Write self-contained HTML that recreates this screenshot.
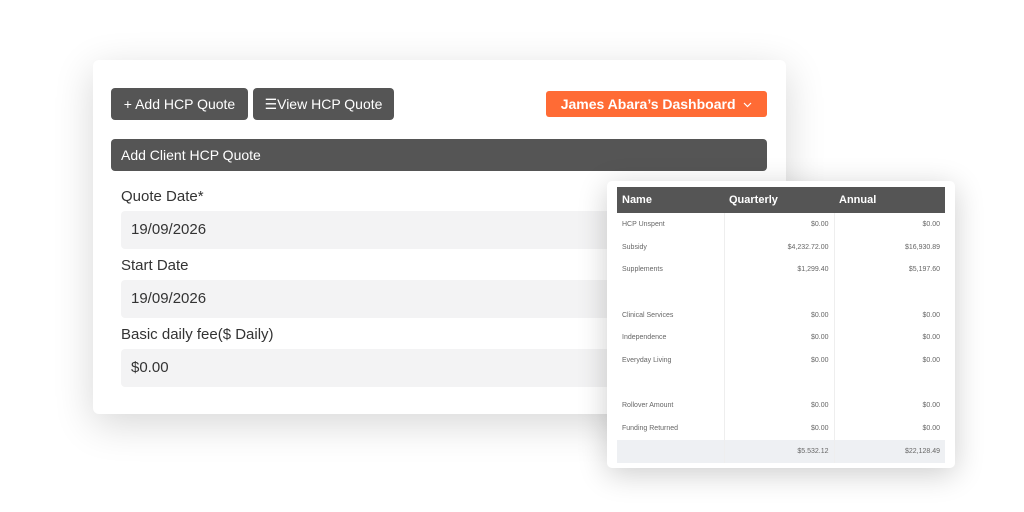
<!DOCTYPE html>
<html><head><style>
body{margin:0;width:1024px;height:512px;background:#fff;font-family:"Liberation Sans",sans-serif;position:relative;overflow:hidden}
.card{position:absolute;left:93px;top:60px;width:693px;height:354px;background:#fff;border-radius:6px;box-shadow:0 10px 40px rgba(0,0,0,.16)}
.btn{position:absolute;top:88px;height:32px;background:#555;color:#fff;border-radius:4px;font-size:14px;line-height:32px;text-align:center}
.or{position:absolute;left:546px;top:91px;width:221px;height:26px;background:#ff6b35;color:#fff;border-radius:3px;font-size:14px;font-weight:bold;line-height:26px;text-align:center}
.bar{position:absolute;left:111px;top:139px;width:656px;height:32px;background:#555;color:#fff;border-radius:4px;font-size:14px;line-height:32px;padding-left:10px;box-sizing:border-box}
.lbl{position:absolute;left:121px;font-size:15px;color:#333}
.inp{position:absolute;left:121px;width:520px;height:38px;background:#f3f3f4;border-radius:4px;font-size:15px;color:#333;line-height:38px;padding-left:10px;box-sizing:border-box}
.tc{position:absolute;left:607px;top:181px;width:348px;height:287px;background:#fff;border-radius:5px;box-shadow:0 6px 30px rgba(0,0,0,.2)}
table{position:absolute;left:10px;top:6px;width:328px;border-collapse:collapse;font-size:7px;color:#666}
th{background:#555;color:#fff;font-size:11px;text-align:left;height:26px;padding:0 5px}
td{height:22.7px;padding:0 5px;border-right:1px solid #eee}
td:last-child{border-right:none}
td.r{text-align:right}
tr.t td{background:#eef0f3}
</style></head><body>
<div class="card"></div>
<div class="btn" style="left:111px;width:137px">+ Add HCP Quote</div>
<div class="btn" style="left:253px;width:141px">☰View HCP Quote</div>
<div class="or">James Abara’s Dashboard &nbsp;<svg width="9" height="6" viewBox="0 0 9 6" style="vertical-align:middle"><path d="M1 1l3.5 3.5L8 1" stroke="#fff" stroke-width="1.2" fill="none"/></svg></div>
<div class="bar">Add Client HCP Quote</div>
<div class="lbl" style="top:188px">Quote Date*</div>
<div class="inp" style="top:211px">19/09/2026</div>
<div class="lbl" style="top:257px">Start Date</div>
<div class="inp" style="top:280px">19/09/2026</div>
<div class="lbl" style="top:326px">Basic daily fee($ Daily)</div>
<div class="inp" style="top:349px">$0.00</div>
<div class="tc"><table>
<tr><th style="width:97px">Name</th><th style="width:100px">Quarterly</th><th>Annual</th></tr>
<tr><td>HCP Unspent</td><td class="r">$0.00</td><td class="r">$0.00</td></tr>
<tr><td>Subsidy</td><td class="r">$4,232.72.00</td><td class="r">$16,930.89</td></tr>
<tr><td>Supplements</td><td class="r">$1,299.40</td><td class="r">$5,197.60</td></tr>
<tr><td></td><td></td><td></td></tr>
<tr><td>Clinical Services</td><td class="r">$0.00</td><td class="r">$0.00</td></tr>
<tr><td>Independence</td><td class="r">$0.00</td><td class="r">$0.00</td></tr>
<tr><td>Everyday Living</td><td class="r">$0.00</td><td class="r">$0.00</td></tr>
<tr><td></td><td></td><td></td></tr>
<tr><td>Rollover Amount</td><td class="r">$0.00</td><td class="r">$0.00</td></tr>
<tr><td>Funding Returned</td><td class="r">$0.00</td><td class="r">$0.00</td></tr>
<tr class="t"><td></td><td class="r">$5.532.12</td><td class="r">$22,128.49</td></tr>
</table></div>
</body></html>
